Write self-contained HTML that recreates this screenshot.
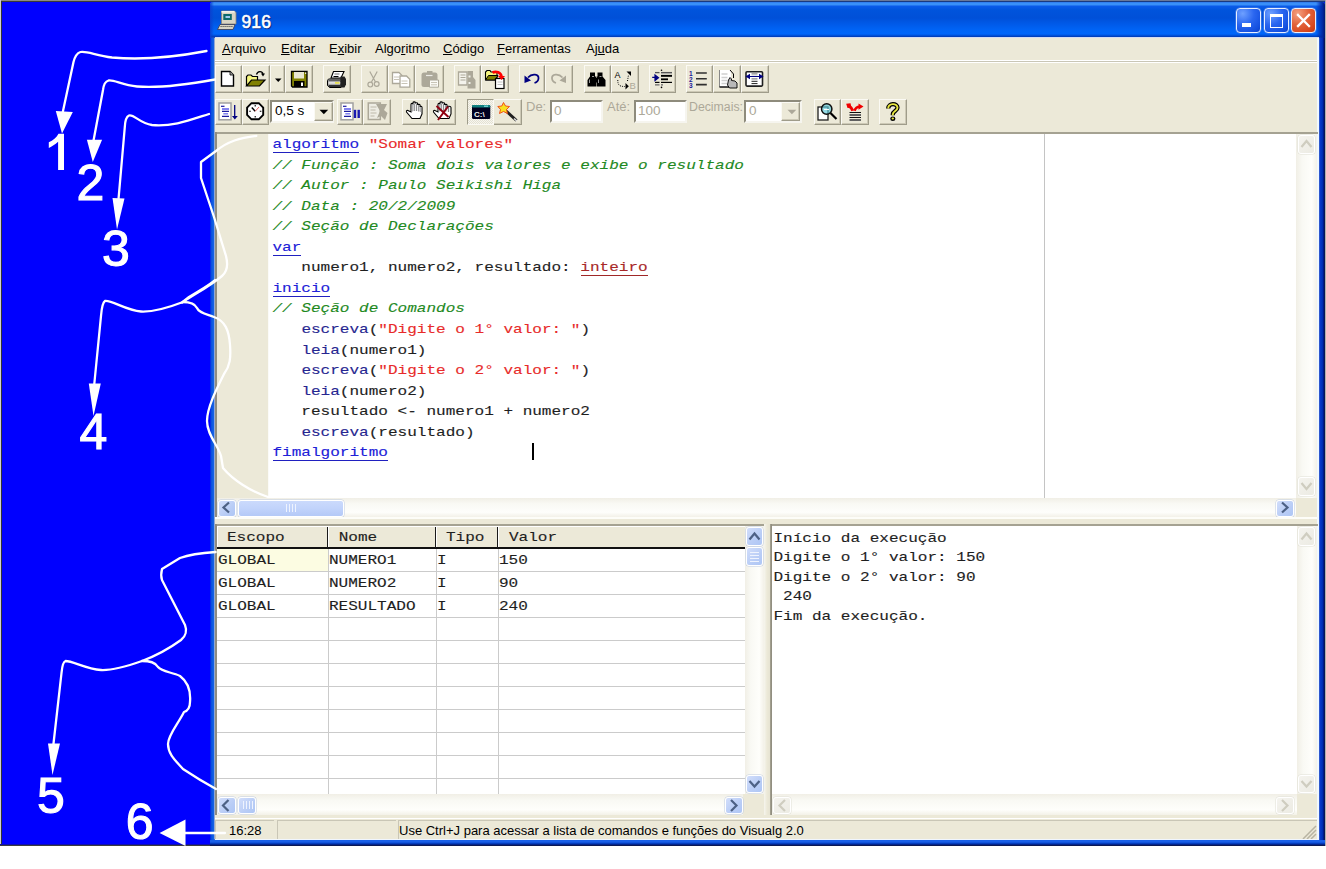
<!DOCTYPE html><html><head><meta charset="utf-8"><style>
*{margin:0;padding:0;box-sizing:border-box}
html,body{width:1326px;height:869px;overflow:hidden;background:#fff;font-family:"Liberation Sans",sans-serif}
div{position:absolute}
.mono{font-family:"Liberation Mono",monospace}
.menu{top:37px;height:23px;font-size:13px;line-height:23px;color:#000;white-space:nowrap}
.u{text-decoration:underline}
.btn{border:1px solid;border-color:#fbfaf4 #9f9c8a #9f9c8a #fbfaf4;box-shadow:inset -1px -1px 0 #cdc9b6}
.sunk{border:2px solid;border-color:#8e8b7c #f6f5ef #f6f5ef #8e8b7c;background:#fff}
.lbl{font-size:13px;color:#aca899;white-space:nowrap;line-height:14px}
.code{font-family:"Liberation Mono",monospace;font-size:16.05px;line-height:20px;white-space:pre;color:#1e1e1e;transform:scaleY(0.84);transform-origin:0 14px;-webkit-text-stroke:0.15px currentColor}
.sbb{border-radius:3px;border:1px solid #fff;background:linear-gradient(135deg,#d2defb,#b9cdf6 60%,#aec6f5);box-shadow:0 0 0 0.5px #c0cce0}
.sbd{border-radius:3px;border:1px solid #fff;background:linear-gradient(135deg,#f4f3ee,#ecebe3);box-shadow:0 0 0 0.5px #e0dfd6}
.trackh{background:linear-gradient(#f1efe6,#f9f9f4 30%,#fefefb 75%,#f3f1e8)}
.trackv{background:linear-gradient(90deg,#f1efe6,#f9f9f4 30%,#fefefb 75%,#f3f1e8)}
</style></head><body>
<div style="left:0;top:0;width:1326px;height:846px;background:#0000ff"></div>
<div style="left:0;top:0;width:1326px;height:1px;background:#8c8984"></div>
<div style="left:0;top:1px;width:1326px;height:1px;background:#3a3836"></div>
<div style="left:0;top:0;width:1px;height:846px;background:#cfcfcf"></div>
<div style="left:1px;top:1px;width:1px;height:845px;background:#333"></div>
<div style="left:0;top:844px;width:1326px;height:1px;background:#1010b0"></div>
<div style="left:0;top:845px;width:1326px;height:1px;background:#3c3c40"></div>
<div style="left:1325px;top:0;width:1px;height:846px;background:#b0b0b0"></div>
<div style="left:210px;top:0;width:1115px;height:1px;background:#6a7898"></div>
<div style="left:210px;top:1px;width:1115px;height:1px;background:#1a3a80"></div>
<div style="left:210px;top:2px;width:1115px;height:843px;background:#0454e4;border-radius:3px 3px 0 0"></div>
<div style="left:210px;top:2px;width:1115px;height:36px;border-radius:3px 3px 0 0;background:linear-gradient(#2a70e8 0px,#3a90f8 1px,#3a90f8 2.5px,#0a5ae8 4.5px,#0054dc 8px,#0050d8 16px,#0058e6 21px,#0064f6 28px,#0066fa 32px,#0050d8 33.5px,#0038b0 35px,#2050c0 35.5px,#c8d4f0 36px)"></div>
<div style="left:1316px;top:2px;width:9px;height:36px;border-radius:0 3px 0 0;background:linear-gradient(90deg,rgba(0,40,180,0),rgba(0,40,170,0.6) 40%,#0028a0 75%,#001870)"></div>
<div style="left:210px;top:2px;width:4px;height:36px;border-radius:3px 0 0 0;background:linear-gradient(90deg,#0a40d0,rgba(10,80,230,0))"></div>
<div style="left:210px;top:38px;width:5px;height:807px;background:linear-gradient(90deg,#0020e8,#0a50e0 30%,#1462e4 70%,#5080d8)"></div>
<div style="left:1319px;top:38px;width:6px;height:807px;background:linear-gradient(90deg,#4068d0,#0836c8 25%,#0030b8 55%,#001480 80%,#101838)"></div>
<div style="left:210px;top:840px;width:1115px;height:6px;background:linear-gradient(#1a60e8 0px,#1a60e8 2px,#0a48d0 3px,#0030a8 4px,#0a1a70 5px,#101838 6px)"></div>
<div style="left:215px;top:839px;width:1104px;height:1px;background:#f0f6ff"></div>
<div style="left:215px;top:38px;width:1104px;height:801px;background:#ece9d8"></div>
<div style="left:215px;top:37px;width:1104px;height:1px;background:#d4dcf2"></div>
<div style="left:214px;top:38px;width:1px;height:801px;background:#90a8d8"></div>
<div style="left:1317px;top:38px;width:2px;height:801px;background:#f0f8ff"></div>
<div style="left:241.5px;top:10px;font-size:17.5px;font-weight:normal;-webkit-text-stroke:0.6px #fff;color:#fff;letter-spacing:0.1px;text-shadow:1px 1px 1px #0a1a70;line-height:24px">916</div>
<div style="left:1236px;top:8px;width:25px;height:25px;border-radius:4px;border:1.3px solid #e8f0ff;background:radial-gradient(circle at 25% 20%,#6ea0ff,#2a66f0 45%,#1450e0 80%,#0a40c8);box-shadow:0 0 0 0.6px #5080e8"></div>
<div style="left:1264px;top:8px;width:25px;height:25px;border-radius:4px;border:1.3px solid #e8f0ff;background:radial-gradient(circle at 25% 20%,#6ea0ff,#2a66f0 45%,#1450e0 80%,#0a40c8);box-shadow:0 0 0 0.6px #5080e8"></div>
<div style="left:1291px;top:8px;width:25px;height:25px;border-radius:4px;border:1.3px solid #e8f0ff;background:radial-gradient(circle at 25% 20%,#f4a080,#e2623a 45%,#d8461c 80%,#c03810);box-shadow:0 0 0 0.6px #5080e8"></div>
<div style="left:1242px;top:23px;width:9px;height:4px;background:#fff"></div>
<div style="left:1270px;top:14px;width:13px;height:13.5px;border:1.6px solid #fff;border-top-width:3.7px"></div>
<svg style="position:absolute;left:1291px;top:8px" width="25" height="25"><path d="M7,7 L18,18 M18,7 L7,18" stroke="#fff" stroke-width="2.3" stroke-linecap="square"/></svg>
<div class="menu" style="left:222px"><span class="u">A</span>rquivo</div>
<div class="menu" style="left:281px"><span class="u">E</span>ditar</div>
<div class="menu" style="left:329px">E<span class="u">x</span>ibir</div>
<div class="menu" style="left:375px">Algo<span class="u">r</span>itmo</div>
<div class="menu" style="left:443px"><span class="u">C</span>ódigo</div>
<div class="menu" style="left:497px"><span class="u">F</span>erramentas</div>
<div class="menu" style="left:586px">Aj<span class="u">u</span>da</div>
<div style="left:215px;top:60px;width:1102px;height:1px;background:#fff"></div>
<div style="left:215px;top:61px;width:1102px;height:1px;background:#c9c6b6"></div>
<div style="left:215px;top:62px;width:1102px;height:1px;background:#fff"></div>
<div class="btn" style="left:215px;top:65px;width:27px;height:28px"></div>
<div class="btn" style="left:242px;top:65px;width:28px;height:28px"></div>
<div class="btn" style="left:270px;top:65px;width:15px;height:28px"></div>
<div class="btn" style="left:285px;top:65px;width:28px;height:28px"></div>
<div class="btn" style="left:323px;top:65px;width:28px;height:28px"></div>
<div class="btn" style="left:361px;top:65px;width:27px;height:28px"></div>
<div class="btn" style="left:388px;top:65px;width:27px;height:28px"></div>
<div class="btn" style="left:415px;top:65px;width:29px;height:28px"></div>
<div class="btn" style="left:454px;top:65px;width:27px;height:28px"></div>
<div class="btn" style="left:481px;top:65px;width:28px;height:28px"></div>
<div class="btn" style="left:519px;top:65px;width:26px;height:28px"></div>
<div class="btn" style="left:545px;top:65px;width:28px;height:28px"></div>
<div class="btn" style="left:584px;top:65px;width:27px;height:28px"></div>
<div class="btn" style="left:611px;top:65px;width:28px;height:28px"></div>
<div class="btn" style="left:649px;top:65px;width:27px;height:28px"></div>
<div class="btn" style="left:686px;top:65px;width:27px;height:28px"></div>
<div class="btn" style="left:713px;top:65px;width:28px;height:28px"></div>
<div class="btn" style="left:741px;top:65px;width:28px;height:28px"></div>
<div class="btn" style="left:215px;top:99px;width:27px;height:26px"></div>
<div class="btn" style="left:242px;top:99px;width:27px;height:26px"></div>
<div class="btn" style="left:337px;top:99px;width:26px;height:26px"></div>
<div class="btn" style="left:363px;top:99px;width:28px;height:26px"></div>
<div class="btn" style="left:402px;top:99px;width:26px;height:26px"></div>
<div class="btn" style="left:428px;top:99px;width:28px;height:26px"></div>
<div class="btn" style="left:493px;top:99px;width:29px;height:26px"></div>
<div class="btn" style="left:814px;top:99px;width:27px;height:26px"></div>
<div class="btn" style="left:841px;top:99px;width:28px;height:26px"></div>
<div class="btn" style="left:879px;top:99px;width:28px;height:26px"></div>
<div style="left:467px;top:99px;width:27px;height:26px;border:1px solid;border-color:#9f9c8a #fbfaf4 #fbfaf4 #9f9c8a;background:repeating-conic-gradient(#f7f6f0 0 25%,#e4e1d2 0 50%) 0 0/2px 2px"></div>
<div style="left:270px;top:100px;width:64px;height:23px;border:2px solid;border-color:#8e8b7c #f6f5ef #f6f5ef #8e8b7c;background:#fff"></div>
<div class="btn" style="left:314px;top:102px;width:19px;height:19px;background:#ece9d8"></div>
<div style="left:275px;top:103px;font-size:13.5px;line-height:16px;color:#000">0,5 s</div>
<div class="lbl" style="left:526px;top:100px">De:</div>
<div class="sunk" style="left:550px;top:100px;width:53px;height:23px"></div>
<div class="lbl" style="left:554px;top:104px;font-size:13.5px;line-height:14px">0</div>
<div class="lbl" style="left:607px;top:100px">Até:</div>
<div class="sunk" style="left:634px;top:100px;width:53px;height:23px"></div>
<div class="lbl" style="left:638px;top:104px;font-size:13.5px;line-height:14px">100</div>
<div class="lbl" style="left:689px;top:100px;font-size:12.3px">Decimais:</div>
<div class="sunk" style="left:744px;top:100px;width:58px;height:23px"></div>
<div class="btn" style="left:781px;top:102px;width:19px;height:19px;background:#ece9d8"></div>
<div class="lbl" style="left:749px;top:104px;font-size:13.5px;line-height:14px">0</div>
<div style="left:215px;top:132px;width:1103px;height:2px;background:#a5a292"></div>
<div style="left:215px;top:132px;width:2px;height:385px;background:#8f8d80"></div>
<div style="left:217px;top:134px;width:52px;height:364px;background:#ece9d8"></div>
<div style="left:268px;top:134px;width:1px;height:364px;background:#fbfbf8"></div>
<div style="left:269px;top:134px;width:1027px;height:364px;background:#fff"></div>
<div style="left:1044px;top:134px;width:1px;height:364px;background:#c4c4c4"></div>
<div class="trackv" style="left:1296px;top:134px;width:21px;height:364px"></div>
<div class="sbd" style="left:1298px;top:135px;width:17px;height:19px"></div>
<div class="sbd" style="left:1298px;top:477px;width:17px;height:19px"></div>
<div class="trackh" style="left:217px;top:498px;width:1079px;height:19px"></div>
<div style="left:1296px;top:498px;width:21px;height:19px;background:#ece9d8"></div>
<div class="sbb" style="left:218px;top:500px;width:18px;height:17px"></div>
<div class="sbb" style="left:238px;top:500px;width:106px;height:17px;background:linear-gradient(#cbdafc,#c1d3fb 50%,#b4c9f7)"></div>
<div class="sbb" style="left:1276px;top:500px;width:18px;height:17px"></div>
<div class="code" style="left:272.5px;top:134.00px"><span style="color:#2020d8">algoritmo</span> <span style="color:#e82a2a">"Somar valores"</span></div>
<div class="code" style="left:272.5px;top:154.55px"><span style="color:#1f8a1f;font-style:italic">// Função : Soma dois valores e exibe o resultado</span></div>
<div class="code" style="left:272.5px;top:175.10px"><span style="color:#1f8a1f;font-style:italic">// Autor : Paulo Seikishi Higa</span></div>
<div class="code" style="left:272.5px;top:195.65px"><span style="color:#1f8a1f;font-style:italic">// Data : 20/2/2009</span></div>
<div class="code" style="left:272.5px;top:216.20px"><span style="color:#1f8a1f;font-style:italic">// Seção de Declarações</span></div>
<div class="code" style="left:272.5px;top:236.75px"><span style="color:#2020d8">var</span></div>
<div class="code" style="left:272.5px;top:257.30px">   numero1, numero2, resultado: <span style="color:#a82828">inteiro</span></div>
<div class="code" style="left:272.5px;top:277.85px"><span style="color:#2020d8">inicio</span></div>
<div class="code" style="left:272.5px;top:298.40px"><span style="color:#1f8a1f;font-style:italic">// Seção de Comandos</span></div>
<div class="code" style="left:272.5px;top:318.95px">   <span style="color:#262690">escreva</span>(<span style="color:#e82a2a">"Digite o 1° valor: "</span>)</div>
<div class="code" style="left:272.5px;top:339.50px">   <span style="color:#262690">leia</span>(numero1)</div>
<div class="code" style="left:272.5px;top:360.05px">   <span style="color:#262690">escreva</span>(<span style="color:#e82a2a">"Digite o 2° valor: "</span>)</div>
<div class="code" style="left:272.5px;top:380.60px">   <span style="color:#262690">leia</span>(numero2)</div>
<div class="code" style="left:272.5px;top:401.15px">   resultado <- numero1 + numero2</div>
<div class="code" style="left:272.5px;top:421.70px">   <span style="color:#262690">escreva</span>(resultado)</div>
<div class="code" style="left:272.5px;top:442.25px"><span style="color:#2020d8">fimalgoritmo</span></div>
<div style="left:272.5px;top:151.80px;width:86.7px;height:1.4px;background:#2020c0"></div>
<div style="left:272.5px;top:254.55px;width:28.9px;height:1.4px;background:#2020c0"></div>
<div style="left:580.7px;top:275.10px;width:67.4px;height:1.4px;background:#a02828"></div>
<div style="left:272.5px;top:295.65px;width:57.8px;height:1.4px;background:#2020c0"></div>
<div style="left:272.5px;top:460.05px;width:115.6px;height:1.4px;background:#2020c0"></div>
<div style="left:532px;top:443px;width:2px;height:17px;background:#000"></div>
<div style="left:215px;top:517px;width:1102px;height:2px;background:#fdfdf8"></div>
<div style="left:215px;top:524px;width:1103px;height:2px;background:#a5a292"></div>
<div style="left:215px;top:524px;width:2px;height:292px;background:#8f8d80"></div>
<div style="left:217px;top:526px;width:528px;height:268px;background:#fff"></div>
<div style="left:217px;top:526px;width:528px;height:22px;background:#ece9d8"></div>
<div style="left:217px;top:547px;width:528px;height:2px;background:#111"></div>
<div style="left:328px;top:549px;width:1px;height:245px;background:#cbcbcb"></div>
<div style="left:327px;top:526px;width:1px;height:22px;background:#1a1a1a"></div>
<div style="left:328px;top:526px;width:1px;height:21px;background:#fff"></div>
<div style="left:436px;top:549px;width:1px;height:245px;background:#cbcbcb"></div>
<div style="left:435px;top:526px;width:1px;height:22px;background:#1a1a1a"></div>
<div style="left:436px;top:526px;width:1px;height:21px;background:#fff"></div>
<div style="left:498px;top:549px;width:1px;height:245px;background:#cbcbcb"></div>
<div style="left:497px;top:526px;width:1px;height:22px;background:#1a1a1a"></div>
<div style="left:498px;top:526px;width:1px;height:21px;background:#fff"></div>
<div style="left:217px;top:571px;width:528px;height:1px;background:#cbcbcb"></div>
<div style="left:217px;top:594px;width:528px;height:1px;background:#cbcbcb"></div>
<div style="left:217px;top:617px;width:528px;height:1px;background:#cbcbcb"></div>
<div style="left:217px;top:640px;width:528px;height:1px;background:#cbcbcb"></div>
<div style="left:217px;top:663px;width:528px;height:1px;background:#cbcbcb"></div>
<div style="left:217px;top:686px;width:528px;height:1px;background:#cbcbcb"></div>
<div style="left:217px;top:709px;width:528px;height:1px;background:#cbcbcb"></div>
<div style="left:217px;top:732px;width:528px;height:1px;background:#cbcbcb"></div>
<div style="left:217px;top:755px;width:528px;height:1px;background:#cbcbcb"></div>
<div style="left:217px;top:778px;width:528px;height:1px;background:#cbcbcb"></div>
<div style="left:217px;top:549px;width:111px;height:22px;background:#fcfce2"></div>
<div style="left:217px;top:526px;width:528px;height:1px;background:#fff"></div>
<div style="left:217px;top:526px;width:1px;height:21px;background:#fff"></div>
<div class="code" style="left:227px;top:527.1px">Escopo</div>
<div class="code" style="left:338.7px;top:527.1px">Nome</div>
<div class="code" style="left:446px;top:527.1px">Tipo</div>
<div class="code" style="left:509px;top:527.1px">Valor</div>
<div class="code" style="left:218px;top:549.8px">GLOBAL</div>
<div class="code" style="left:329px;top:549.8px">NUMERO1</div>
<div class="code" style="left:437px;top:549.8px">I</div>
<div class="code" style="left:499px;top:549.8px">150</div>
<div class="code" style="left:218px;top:572.6px">GLOBAL</div>
<div class="code" style="left:329px;top:572.6px">NUMERO2</div>
<div class="code" style="left:437px;top:572.6px">I</div>
<div class="code" style="left:499px;top:572.6px">90</div>
<div class="code" style="left:218px;top:595.5px">GLOBAL</div>
<div class="code" style="left:329px;top:595.5px">RESULTADO</div>
<div class="code" style="left:437px;top:595.5px">I</div>
<div class="code" style="left:499px;top:595.5px">240</div>
<div class="trackv" style="left:745px;top:526px;width:19px;height:268px"></div>
<div class="sbb" style="left:746px;top:527px;width:17px;height:19px"></div>
<div class="sbb" style="left:746px;top:547px;width:17px;height:19px"></div>
<div class="sbb" style="left:746px;top:775px;width:17px;height:18px"></div>
<div class="trackh" style="left:217px;top:794px;width:528px;height:21px"></div>
<div style="left:743px;top:794px;width:22px;height:21px;background:#ece9d8"></div>
<div class="sbb" style="left:218px;top:797px;width:18px;height:17px"></div>
<div class="sbb" style="left:238px;top:797px;width:18px;height:17px"></div>
<div class="sbb" style="left:725px;top:797px;width:18px;height:17px"></div>
<div style="left:764px;top:524px;width:6px;height:292px;background:linear-gradient(90deg,#f6f5ee,#ece9d8 50%,#e6e3d2)"></div>
<div style="left:770px;top:524px;width:548px;height:2px;background:#a5a292"></div>
<div style="left:770px;top:524px;width:2px;height:292px;background:linear-gradient(90deg,#a8a594,#8a877a)"></div>
<div style="left:772px;top:526px;width:545px;height:268px;background:#fff"></div>
<div class="code" style="left:773.5px;top:527.8px">Início da execução</div>
<div class="code" style="left:773.5px;top:547.2px">Digite o 1° valor: 150</div>
<div class="code" style="left:773.5px;top:566.7px">Digite o 2° valor: 90</div>
<div class="code" style="left:773.5px;top:586.1px"> 240</div>
<div class="code" style="left:773.5px;top:605.6px">Fim da execução.</div>
<div class="trackv" style="left:1297px;top:526px;width:20px;height:270px"></div>
<div class="sbd" style="left:1298px;top:527px;width:17px;height:19px"></div>
<div class="sbd" style="left:1298px;top:775px;width:17px;height:18px"></div>
<div class="trackh" style="left:772px;top:794px;width:525px;height:21px"></div>
<div style="left:1297px;top:794px;width:20px;height:21px;background:#ece9d8"></div>
<div class="sbd" style="left:773px;top:797px;width:18px;height:17px"></div>
<div class="sbd" style="left:1276px;top:797px;width:18px;height:17px"></div>
<div style="left:215px;top:815px;width:1102px;height:3px;background:#ece9d8"></div>
<div style="left:215px;top:818px;width:1102px;height:1px;background:#fff"></div>
<div style="left:215px;top:820px;width:59px;height:19px;border-top:1px solid #c9c6b6;border-left:1px solid #c9c6b6"></div>
<div style="left:277px;top:820px;width:119px;height:19px;border-top:1px solid #c9c6b6;border-left:1px solid #c9c6b6"></div>
<div style="left:398px;top:820px;width:919px;height:19px;border-top:1px solid #c9c6b6;border-left:1px solid #c9c6b6"></div>
<div style="left:229px;top:822px;font-size:13px;line-height:17px">16:28</div>
<div style="left:399px;top:822px;font-size:13px;line-height:17px;white-space:nowrap">Use Ctrl+J para acessar a lista de comandos e funções do Visualg 2.0</div>
<svg style="position:absolute;left:1300px;top:823px" width="17" height="16"><path d="M16,3 L3,16 M16,7 L7,16 M16,11 L11,16" stroke="#b8b4a2" stroke-width="1.5"/></svg>
<svg width="1326" height="869" style="position:absolute;left:0;top:0">
<!-- title computer icon -->
<g>
<path d="M221.5,11 H234.5 L236,12.5 V24 H221.5 Z" fill="#d8d4c4" stroke="#8a8676" stroke-width="0.8"/>
<rect x="221.5" y="11" width="13" height="1.6" fill="#f4f2e8"/>
<rect x="223.3" y="14" width="8.5" height="6" fill="#0e6a6a"/>
<rect x="225.5" y="16" width="4.5" height="2" fill="#9cc8f0"/>
<path d="M220,24.5 H235 L233,29.5 H217.5 Z" fill="#d8d4c4" stroke="#3a3a50" stroke-width="0.8"/>
<path d="M220.5,26.5 H233" stroke="#505050" stroke-width="1.2" stroke-dasharray="1.2,0.8"/>
</g>

<!-- new doc -->
<path d="M221.5,71.5 H230 L233.5,75 V86 H221.5 Z" fill="#fff" stroke="#000" stroke-width="1.4"/>
<path d="M230,71.5 V75 H233.5" fill="#a0a0a0" stroke="#000" stroke-width="0.8"/>
<!-- open folder -->
<path d="M246.5,86 V76.5 L248,75 H251 L252.5,76.5 H257.5 V80" fill="#f6f680" stroke="#000" stroke-width="1.2"/>
<path d="M246.5,86 L251.5,80 H265 L259.5,86 Z" fill="#808000" stroke="#000" stroke-width="1.2"/>
<path d="M256.5,74.5 C257.5,71 262,70.5 263,74" fill="none" stroke="#000" stroke-width="1.3"/>
<path d="M261,73.5 H265 L263,76.5 Z" fill="#000"/>
<!-- dropdown -->
<path d="M275,78.5 H281.5 L278.25,82 Z" fill="#000"/>
<!-- floppy -->
<path d="M291.5,71.5 H307 V87 H292.5 L291.5,86 Z" fill="#808000" stroke="#000" stroke-width="1.3"/>
<rect x="294" y="72" width="10" height="6.5" fill="#e8e6d2"/>
<rect x="294" y="81" width="10.5" height="6" fill="#000"/>
<rect x="301" y="82.5" width="2" height="3.5" fill="#fff"/>
<rect x="305" y="72.5" width="1.2" height="1.5" fill="#e0e0e0"/>
<!-- printer -->
<path d="M333.5,71.5 H344 L341,78 H331 Z" fill="#fff" stroke="#000" stroke-width="1.1"/>
<path d="M334.5,74 H339.5" stroke="#707070" stroke-width="1"/>
<path d="M333.5,76.5 H338.5" stroke="#000" stroke-width="1"/>
<path d="M328.5,79 H341 V87.5 H329.5 L327.5,85.5 V80.5 Z" fill="#a8a8a8" stroke="#000" stroke-width="1"/>
<rect x="328.5" y="79" width="12" height="2" fill="#606060"/>
<rect x="328.5" y="82" width="12" height="1.8" fill="#e0e0e0"/>
<rect x="328.5" y="85" width="12" height="2" fill="#303030"/>
<rect x="335" y="82" width="4.5" height="1.8" fill="#e8e050"/>
<path d="M340.5,76.5 H344.5 L346,79 V84.5 L344.5,87.5 H340.5 Z" fill="#202020"/>
<!-- scissors gray -->
<g fill="none" stroke="#aca899" stroke-width="1.2">
<path d="M369.8,71.5 L375.5,82 M377.2,71.5 L371.5,82"/>
<circle cx="370.3" cy="84.6" r="2.4"/><circle cx="376.7" cy="84" r="2.4"/>
</g>
<!-- copy gray -->
<g fill="#fff" stroke="#aca899" stroke-width="1.3">
<path d="M392.5,72.5 H399 L402,75.5 V83.5 H392.5 Z"/>
<path d="M400,76 H406.5 L409.8,79.3 V87.2 H400 Z"/>
</g>
<g stroke="#c8c4b6" stroke-width="1"><path d="M394,77 h5 M394,79.5 h5 M401.5,81 h6 M401.5,83.5 h6"/></g>
<!-- paste gray -->
<rect x="421.5" y="72.5" width="16" height="14.5" rx="2.5" fill="#aca899"/>
<rect x="427" y="71" width="5.5" height="2" fill="#aca899"/>
<path d="M426,75.5 H432.5" stroke="#ecebe4" stroke-width="1.2"/>
<path d="M429.5,80 H438.5 V87.2 H429.5 Z" fill="#fbfbf6" stroke="#aca899" stroke-width="1"/>
<path d="M431,82.5 h6 M431,84.8 h6" stroke="#c8c4b6" stroke-width="1"/>
<!-- disabled copy-to -->
<path d="M458.5,72 H467 V85 H458.5 Z" fill="#f4f3ec" stroke="#aca899" stroke-width="1.3"/>
<path d="M460.5,75 h5 M460.5,77.5 h5 M460.5,80 h5" stroke="#aca899" stroke-width="1"/>
<path d="M467.5,71 H473 V77 L475.5,80 V88.5 H467.5 Z" fill="#aca899"/>
<rect x="468.5" y="75.5" width="2" height="2" fill="#f0f0e8"/><rect x="468.5" y="82" width="2" height="2" fill="#f0f0e8"/>
<!-- open red -->
<path d="M485.5,80 V72 L487,70.5 H490 L491,72 H497 V80 Z" fill="#f6f680" stroke="#000" stroke-width="1.1"/>
<path d="M485.5,80 L488.5,75.5 H498 L495,80 Z" fill="#808000" stroke="#000" stroke-width="1"/>
<rect x="495.5" y="78.5" width="8.5" height="10" fill="#fff" stroke="#000" stroke-width="1.2"/>
<path d="M497.5,82 h5 M497.5,84.5 h5" stroke="#c0c0c0" stroke-width="1"/>
<path d="M492.5,72.5 C496,71 501,72 501.5,77" fill="none" stroke="#ff0000" stroke-width="2.8"/>
<path d="M498,76 H505 L501.5,80 Z" fill="#ff0000"/>
<!-- undo -->
<path d="M528,77.5 C532,73 539,74 538.5,78.5 C538.3,81 536,82.5 534.5,83" fill="none" stroke="#000080" stroke-width="1.8"/>
<path d="M524.5,75.5 L524.5,83 L531,80.5 Z" fill="#000080"/>
<!-- redo gray -->
<path d="M562.5,77.5 C558.5,73 551.5,74 552,78.5 C552.2,81 554.5,82.5 556,83" fill="none" stroke="#aca899" stroke-width="1.8"/>
<path d="M566,75.5 L566,83 L559.5,80.5 Z" fill="#aca899"/>
<!-- binoculars -->
<g fill="#000">
<path d="M590,72.5 H595 V76.5 H596 V86.5 H587.5 V80 L590,76.5 Z"/>
<path d="M597.5,72.5 H602.5 V76.5 L605.5,80 V86.5 H596.5 V76.5 H597.5 Z"/>
<rect x="594.5" y="78" width="3.5" height="4.5"/>
</g>
<path d="M589.5,79.5 v3.5 M598.5,79.5 v3.5 M592,76.5 h2 M599.5,76.5 h2" stroke="#9a9a9a" stroke-width="1"/>
<!-- A->B -->
<text x="614.5" y="77.8" font-family="Liberation Sans" font-size="9" fill="#000">A</text>
<text x="629.5" y="88.5" font-family="Liberation Sans" font-size="9.5" fill="#aca899">B</text>
<path d="M617.8,80 C617.8,85 619,86.5 625,86.5" fill="none" stroke="#000" stroke-width="1" stroke-dasharray="1,1.2"/>
<path d="M625.5,83 L628.8,86.3 L625.5,89.5 Z" fill="#000"/>
<path d="M627.5,81 L628.5,75" fill="none" stroke="#000" stroke-width="1" stroke-dasharray="1,1.2"/>
<path d="M626.5,71.5 H631 V76 Z" fill="#000"/>
<!-- indent -->
<circle cx="661.5" cy="70.3" r="0.8" fill="#000"/><circle cx="661.5" cy="87.4" r="0.8" fill="#000"/>
<path d="M661,72.6 H672" stroke="#555" stroke-width="1.3"/>
<path d="M661,73.9 H672" stroke="#999" stroke-width="0.8"/>
<path d="M661,75.9 H672" stroke="#000" stroke-width="1.8"/>
<path d="M661,79.3 H668" stroke="#000" stroke-width="1.8"/>
<path d="M661,82.4 H672" stroke="#000" stroke-width="1.2"/>
<path d="M661,84.8 H663 M655,84.8 H659.5" stroke="#666" stroke-width="1.3"/>
<path d="M655,72.6 H659.5" stroke="#555" stroke-width="1.3"/>
<path d="M655,82.4 H659.5" stroke="#000" stroke-width="1.2"/>
<path d="M652.2,77.3 H655.5 M655,75 L658.5,77.8 L655,80.6 Z" fill="#000080" stroke="#000080" stroke-width="1.2"/>
<!-- numbered list -->
<text x="689" y="76" font-family="Liberation Sans" font-size="6.5" font-weight="bold" fill="#1a1a9a">1</text>
<text x="689" y="82" font-family="Liberation Sans" font-size="6.5" font-weight="bold" fill="#1a1a9a">2</text>
<text x="689" y="88" font-family="Liberation Sans" font-size="6.5" font-weight="bold" fill="#1a1a9a">3</text>
<path d="M696,73 H706.8 M696,78.7 H706.8 M696,84.6 H706.8" stroke="#303030" stroke-width="1.6"/>
<!-- doc hand -->
<path d="M719.5,70 H731 V87 H719.5 Z" fill="#fff"/>
<path d="M719.5,70 V87 H731" fill="none" stroke="#888" stroke-width="1"/>
<path d="M719.5,87 H729" stroke="#000" stroke-width="1.2"/>
<path d="M721.5,74 h6 M721.5,77.5 h6 M721.5,80.5 h6 M721.5,83.5 h6" stroke="#d0d0d0" stroke-width="1.6"/>
<path d="M730,70 L733.5,74 V78" stroke="#000" stroke-width="1" fill="none"/>
<path d="M728.5,80 L730,77.5 L731.5,79 V80.5 L735,81 L737,83 V88 H729.5 L727.5,85 Z" fill="#b8b8b8" stroke="#000" stroke-width="0.9"/>
<!-- arrows box -->
<rect x="746" y="71.8" width="16.5" height="14.3" rx="1" fill="#fff" stroke="#202020" stroke-width="1.6"/>
<path d="M751.5,73.8 h6 M751.5,78.8 h6" stroke="#888" stroke-width="1.2"/>
<path d="M751.5,76.4 h6 M751.5,81.3 h6 M751.5,83.6 h6" stroke="#202020" stroke-width="1"/>
<path d="M745.5,76.5 L750,73.8 V79.2 Z M763.5,76.5 L759,73.8 V79.2 Z" fill="#000080"/>
<path d="M747,76.5 h15" stroke="#000080" stroke-width="1"/>

<!-- row2: page down -->
<rect x="219" y="103" width="12" height="16.8" fill="#fff" stroke="#a0a0a0" stroke-width="1.5"/>
<path d="M221,106.3 h3.5" stroke="#1a1aa0" stroke-width="1.2"/>
<path d="M222,109 h7" stroke="#7878f0" stroke-width="1.8"/>
<path d="M222,111.4 h7 M222,116.4 h7" stroke="#1a1aa0" stroke-width="1.3"/>
<path d="M223.3,113.8 h4.8" stroke="#7878f0" stroke-width="1.4"/>
<path d="M234.7,105 V117" stroke="#000080" stroke-width="1.3"/>
<path d="M232,116 H237.8 L234.8,119.6 Z" fill="#000080"/>
<!-- clock -->
<path d="M251.5,103.2 H258.8 L263.2,107.6 V114.9 L258.8,119.3 H251.5 L247.1,114.9 V107.6 Z" fill="#fff" stroke="#000" stroke-width="1.9"/>
<path d="M255.2,105 v1.6 M255.2,116 v1.6 M249.2,111.3 h1.6 M259.8,111.3 h1.6" stroke="#000" stroke-width="1.1"/>
<path d="M255.2,111.3 L251.8,107.5" stroke="#000" stroke-width="1.4"/>
<path d="M255.2,111.3 L259,107" stroke="#e05050" stroke-width="0.9"/>
<!-- row2: page pause -->
<rect x="341" y="103" width="12" height="16.8" fill="#fff" stroke="#a0a0a0" stroke-width="1.5"/>
<path d="M343,106.3 h3.5" stroke="#1a1aa0" stroke-width="1.2"/>
<path d="M344,109 h7" stroke="#7878f0" stroke-width="1.8"/>
<path d="M344,111.4 h7 M344,116.4 h7" stroke="#1a1aa0" stroke-width="1.3"/>
<path d="M345.3,113.8 h4.8" stroke="#7878f0" stroke-width="1.4"/>
<rect x="353.8" y="109.8" width="2.4" height="8.2" fill="#1a1ab0"/>
<rect x="357.5" y="109.8" width="2.4" height="8.2" fill="#1a1ab0"/>
<!-- disabled -->
<rect x="368.3" y="103" width="12" height="16.5" fill="#eeede4" stroke="#aca899" stroke-width="1.5"/>
<path d="M370.5,107 h6 M370.5,110 h5 M370.5,113 h6 M370.5,116 h4" stroke="#bdb9aa" stroke-width="1.2"/>
<path d="M376,104 L387,104 L384,110 L387.5,113 L385,120 L381,116 L377,118 L380,111 Z" fill="#aca899"/>
<!-- hand -->
<path d="M411,112 V104.5 C411,103 413,103 413,104.5 V102.8 C413,101.6 415.3,101.6 415.3,102.8 V103.6 C415.3,102.4 417.6,102.4 417.6,103.6 V105 C417.6,104 420,104 420,105 V107 C420,106 422,106 422,107.5 V114 L420,118.5 H412 L406.5,112 C406,110.5 407.5,110 408.5,110.8 Z" fill="#fff" stroke="#000" stroke-width="1.1"/>
<path d="M412,104.5 v7 M414.2,103.5 v7.5 M416.5,104 v7 M418.8,105 v6.5 M421,107 v5" stroke="#8a8a8a" stroke-width="1.3"/>
<!-- hand X -->
<path d="M438,112 V104.5 C438,103 440,103 440,104.5 V102.8 C440,101.6 442.3,101.6 442.3,102.8 V103.6 C442.3,102.4 444.6,102.4 444.6,103.6 V105 C444.6,104 447,104 447,105 V107 C447,106 451,106 451,107.5 V114 L449,118.5 H439 L433.5,112 C433,110.5 434.5,110 435.5,110.8 Z" fill="#fff" stroke="#000" stroke-width="1.1"/>
<path d="M439,104.5 v7 M441.2,103.5 v7.5 M443.5,104 v7 M445.8,105 v6.5 M448.5,107 v5" stroke="#8a8a8a" stroke-width="1.3"/>
<path d="M436.5,106 L448.5,117 M448,106.5 L438,120" stroke="#900010" stroke-width="2"/>
<!-- console -->
<rect x="472" y="105" width="18.3" height="14" rx="1.5" fill="#000020"/>
<rect x="472" y="105" width="18.3" height="2.6" rx="1" fill="#108080"/>
<rect x="484" y="105.6" width="4" height="1.2" fill="#80e0e0"/>
<text x="474" y="116.5" font-family="Liberation Sans" font-size="8" font-weight="bold" fill="#f0f0f0">C:\</text>
<!-- magic wand -->
<path d="M505,110 L516.5,120.5" stroke="#202020" stroke-width="3"/>
<path d="M514,118.5 L516.8,121" stroke="#e0e0e0" stroke-width="1.5"/>
<path d="M503.5,102.5 L505.5,106 L509.5,106.5 L506.5,109.5 L507.5,113.5 L503.5,111.5 L499.5,113.5 L500.5,109.5 L497.8,106.5 L501.8,106 Z" fill="#f8e020" stroke="#f04010" stroke-width="0.9"/>
<!-- magnify -->
<rect x="818" y="107" width="10" height="13" fill="#fff" stroke="#202020" stroke-width="1.3"/>
<circle cx="826.7" cy="109" r="5.2" fill="#5cc8d8" fill-opacity="0.65" stroke="#101010" stroke-width="1.5"/>
<path d="M824,109.5 h5" stroke="#fff" stroke-width="1"/>
<path d="M830.5,113 L836.5,119" stroke="#000" stroke-width="2.2"/>
<!-- red arrows lines -->
<path d="M849.5,112.5 h11.5 M849.5,117.5 h11.5" stroke="#101010" stroke-width="1.2"/>
<path d="M849.5,115 h11.5 M849.5,120 h11.5" stroke="#606060" stroke-width="1.8"/>
<path d="M852.8,110.8 C852,108.5 850.5,107 849,106" fill="none" stroke="#f00000" stroke-width="3"/>
<path d="M846.2,103.8 L850.5,103.2 L851.5,107.8 L847.5,108 Z" fill="#f00000"/>
<path d="M854.5,110.8 C855.5,108 857.5,106.8 859.5,106.8" fill="none" stroke="#f00000" stroke-width="2.6"/>
<path d="M858.5,103.5 L863.5,106.5 L858.5,109.8 Z" fill="#f00000"/>
<!-- help -->
<path d="M888.2,108.5 C888.2,102.8 897.5,102.8 897.5,107.8 C897.5,110.8 893,111.2 892.8,114.2 V115.2" fill="none" stroke="#000" stroke-width="4.3"/>
<ellipse cx="892.8" cy="118.7" rx="2.6" ry="2.2" fill="#000"/>
<path d="M888.2,108.5 C888.2,102.8 897.5,102.8 897.5,107.8 C897.5,110.8 893,111.2 892.8,114.2 V115.2" fill="none" stroke="#e8e840" stroke-width="1.9"/>
<ellipse cx="892.8" cy="118.6" rx="1.2" ry="1" fill="#e8e840"/>
<!-- combo dropdown arrows -->
<path d="M319.5,109.8 H328.2 L323.85,114.2 Z" fill="#000"/>
<path d="M787.5,109.8 H796.3 L791.9,114.2 Z" fill="#aca899"/>
</svg>
<svg width="1326" height="869" style="position:absolute;left:0;top:0">
<g fill="none" stroke-width="2.2" stroke-linecap="butt" stroke-linejoin="miter">
<path d="M229,502.5 L223.5,507.5 L229,512.5" stroke="#4d6185"/>
<path d="M1282,502.5 L1287.5,507.5 L1282,512.5" stroke="#4d6185"/>
<path d="M228.5,800 L223,805.5 L228.5,811" stroke="#4d6185"/>
<path d="M731,800 L736.5,805.5 L731,811" stroke="#4d6185"/>
<path d="M749.5,539.5 L754.5,533.5 L759.5,539.5" stroke="#4d6185"/>
<path d="M749.5,781 L754.5,786.5 L759.5,781" stroke="#4d6185"/>
<path d="M1301.5,147 L1306.5,141 L1311.5,147" stroke="#cfcdc0"/>
<path d="M1301.5,483 L1306.5,489 L1311.5,483" stroke="#cfcdc0"/>
<path d="M1301.5,539.5 L1306.5,533.5 L1311.5,539.5" stroke="#cfcdc0"/>
<path d="M1301.5,781 L1306.5,786.5 L1311.5,781" stroke="#cfcdc0"/>
<path d="M785,800 L779.5,805.5 L785,811" stroke="#cfcdc0"/>
<path d="M1282,800 L1287.5,805.5 L1282,811" stroke="#cfcdc0"/>
</g>
<g stroke="#eef3fe" stroke-width="1">
<path d="M286.5,504 v8 M289.5,504 v8 M292.5,504 v8 M295.5,504 v8"/>
<path d="M750,552.5 h9 M750,555.5 h9 M750,558.5 h9 M750,561.5 h9"/>
<path d="M243.5,801 v8 M246.5,801 v8 M249.5,801 v8 M252.5,801 v8"/>
</g>
</svg>
<svg width="1326" height="869" style="position:absolute;left:0;top:0">
<g fill="none" stroke="#fff" stroke-width="2.3" stroke-linecap="round" stroke-linejoin="round">
<path d="M206.5,51 C170,58 140,60 112,57.5 C96,55.5 86,50.5 80.5,52 C76,53.5 74.5,58 73.5,62 L61.5,118"/>
<path d="M215,79.5 C185,85 160,88.5 137,86.5 C122,85 114,79.5 108.5,80.5 C104.5,81.5 103.5,86 103,90 L92.5,146"/>
<path d="M209,114 C190,120 172,127 152,125 C140,123.5 134,114 129,115.5 C126,117 125,122 124.8,127 L118,205"/>
<path d="M256.3,135.8 C240,138 228,141 216,151 L201,162 L201,178 L214,217 L226,256 C228,264 227,272 222,276 C210,286 195,294 183,302"/>
<path d="M183,302 C165,309 152,312 141,311.5 C126,310.5 112,300 105,301 C102,303 101.5,310 101,316 L93.5,392"/>
<path d="M182,302.5 L189,297 C200,290 208,286 215,280"/>
<path d="M183,302 C190,302 195,304 197,308 C199,313 206,314 214,317 C225,321 229,330 230,345 C231,358 230,366 224,374 C216,390 207,408 207,421 C207,435 218,445 221,456 L223,468 C233,480 250,491 268,497"/>
<path d="M215.6,552 C200,553 188,555 180,558 L162,569 C161,573 161,577 162,580 L185,625 C187,630 186,636 181,640 C170,648 158,655 142,661"/>
<path d="M142,661 C125,667 112,670.5 101,670 C86,669 73,661 65.5,661 C62.5,662 62,668 61.5,673 L53,748"/>
<path d="M142,661 C150,661 155,662 158,667 C162,672 172,672 180,676 C188,682 191,690 190,702 C190,708 187,711 184,712 C178,724 168,735 168,744 C168,755 177,762 183,769 C195,777 205,783 216,789"/>
<path d="M225,833 L182,833"/>
</g>
<g fill="#fff">
<polygon points="55.8,111 72.8,112 62,133.5"/>
<polygon points="86.9,139.7 102.1,139.7 92.8,162"/>
<polygon points="112.5,198 124.5,198.5 117,229.5"/>
<polygon points="88.8,383.5 100.8,383.5 93.5,416"/>
<polygon points="48,743.5 60,743.5 52.5,775"/>
<polygon points="185.5,819.5 185.5,846 159.6,833"/>
</g>
<g fill="#fff" stroke="#fff" stroke-width="1.1" font-family="Liberation Sans" font-size="50">
<path stroke="none" d="M58.5,133.8 H64 V170 H58.1 V141.8 C55,144.5 52,146.5 48.8,148 V142.2 C53,140.5 56.5,137.5 58.5,133.8 Z"/>
<text x="76.5" y="199.6">2</text>
<text x="102" y="266">3</text>
<text x="79.5" y="448.8">4</text>
<text x="37" y="812.5">5</text>
<text x="125.7" y="839.3">6</text>
</g>
</svg>
</body></html>
